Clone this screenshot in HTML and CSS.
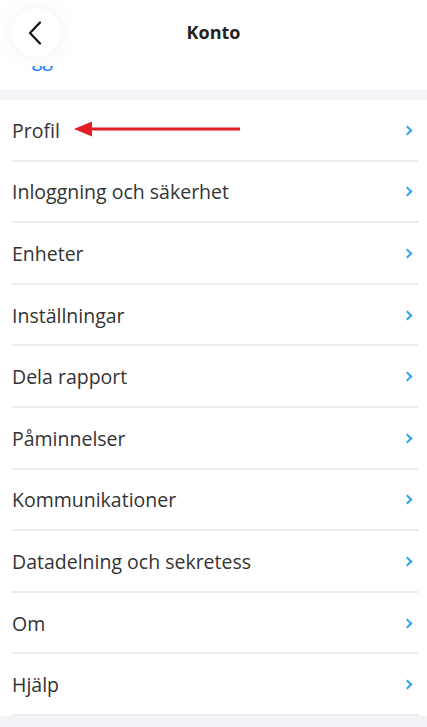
FILE: index.html
```html
<!DOCTYPE html>
<html lang="sv">
<head>
<meta charset="utf-8">
<link rel="stylesheet" href="styles.css">
</head>
<body>
<div class="screen">
  <header class="header">
    <div class="peek"><span class="peek-text">Logga</span></div>
    <button class="back" aria-label="Tillbaka">
      <svg width="14" height="24" viewBox="0 0 14 24"><path d="M12 1.5 L2 12 L12 22.5" fill="none" stroke="#111" stroke-width="2.2" stroke-linecap="round" stroke-linejoin="round"/></svg>
    </button>
    <h1 class="title">Konto</h1>
  </header>
  <div class="band"></div>
  <ul class="list">
    <li class="row"><span class="label">Profil</span><span class="pointer"><svg width="166" height="16" viewBox="0 0 166 16"><polygon points="0,8 18,0.5 18,15.5" fill="#e31e24"/><rect x="16" y="6.5" width="150" height="3" fill="#e31e24"/></svg></span><span class="chev"></span></li>
    <li class="row"><span class="label">Inloggning och säkerhet</span><span class="chev"></span></li>
    <li class="row"><span class="label">Enheter</span><span class="chev"></span></li>
    <li class="row"><span class="label">Inställningar</span><span class="chev"></span></li>
    <li class="row"><span class="label">Dela rapport</span><span class="chev"></span></li>
    <li class="row"><span class="label">Påminnelser</span><span class="chev"></span></li>
    <li class="row"><span class="label">Kommunikationer</span><span class="chev"></span></li>
    <li class="row"><span class="label">Datadelning och sekretess</span><span class="chev"></span></li>
    <li class="row"><span class="label">Om</span><span class="chev"></span></li>
    <li class="row"><span class="label">Hjälp</span><span class="chev"></span></li>
  </ul>
  <div class="footer-band"></div>
</div>
</body>
</html>
```
FILE: styles.css
```css
* { box-sizing: border-box; }
html, body { margin: 0; padding: 0; background: #fff; }
body { font-family: "Open Sans", "Noto Sans", sans-serif; color: #333; }
.screen { width: 427px; height: 727px; overflow: hidden; display: flex; flex-direction: column; }
.header {
  position: relative;
  height: 90px;
  background: #fff;
  display: flex;
  align-items: flex-start;
  justify-content: center;
}
.peek {
  position: absolute;
  left: 0; top: 66px;
  width: 165px; height: 6px;
  overflow: hidden;
}
.peek-text {
  position: absolute;
  left: 10px; top: -17px;
  font-family: "Open Sans", sans-serif;
  font-size: 19px;
  font-weight: 600;
  color: #3b8ff3;
  line-height: 20px;
}
.back {
  position: absolute;
  left: 12px; top: 8px;
  width: 49px; height: 49px;
  border-radius: 50%;
  border: none;
  background: #fff;
  box-shadow: 0 0 22px rgba(0,0,0,0.06);
  display: flex; align-items: center; justify-content: center;
  padding: 0 3px 0 0;
}
.title {
  margin: 20px 0 0;
  font-size: 18px;
  font-weight: 700;
  color: #222;
  line-height: 24px;
}
.band { height: 10px; background: #f2f3f7; }
.list { list-style: none; margin: 0; padding: 0 9px 0 12px; }
.row {
  height: 61.6px;
  border-bottom: 2px solid #ececee;
  display: flex;
  align-items: center;
  font-size: 19.5px;
  color: #333;
  padding-top: 1px;
}
.pointer { display: flex; margin-left: 14px; margin-top: -2px; }
.chev {
  margin-left: auto;
  margin-right: 7px;
  width: 7px; height: 7px;
  border-top: 2px solid #2ea6ee;
  border-right: 2px solid #2ea6ee;
  transform: rotate(45deg);
}
.footer-band { flex: 1; background: #f2f3f7; }
```
